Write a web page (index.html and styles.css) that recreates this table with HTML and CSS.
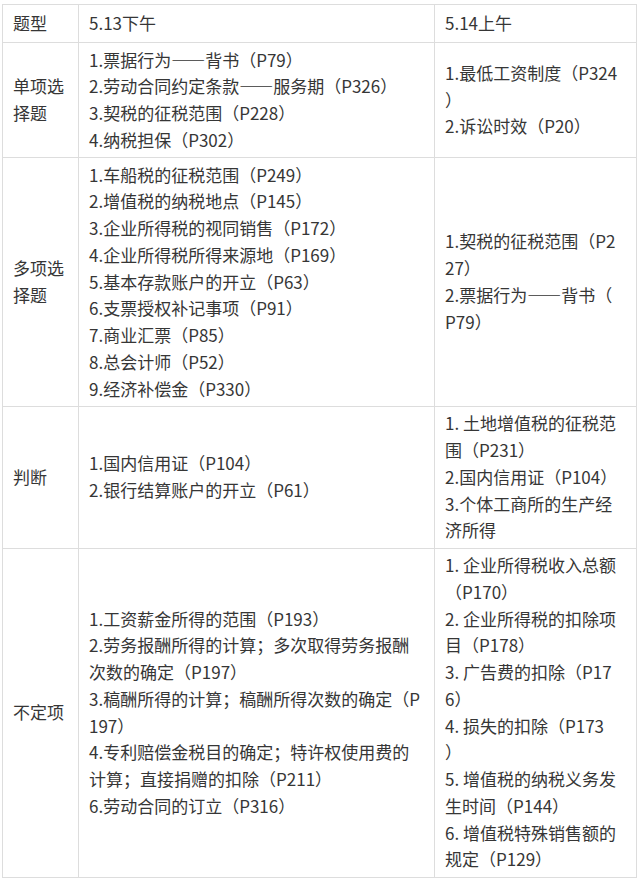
FILE: index.html
```html
<!DOCTYPE html>
<html lang="zh-CN">
<head>
<meta charset="utf-8">
<title>考点</title>
<link rel="stylesheet" href="styles.css">
</head>
<body>
<table class="grid">
  <colgroup>
    <col class="c1">
    <col class="c2">
    <col class="c3">
  </colgroup>
  <tr class="head">
    <td>题型</td>
    <td>5.13下午</td>
    <td>5.14上午</td>
  </tr>
  <tr>
    <td>单项选<br>择题</td>
    <td>1.票据行为——背书（P79）<br>2.劳动合同约定条款——服务期（P326）<br>3.契税的征税范围（P228）<br>4.纳税担保（P302）</td>
    <td>1.最低工资制度（P324<br>）<br>2.诉讼时效（P20）</td>
  </tr>
  <tr>
    <td>多项选<br>择题</td>
    <td>1.车船税的征税范围（P249）<br>2.增值税的纳税地点（P145）<br>3.企业所得税的视同销售（P172）<br>4.企业所得税所得来源地（P169）<br>5.基本存款账户的开立（P63）<br>6.支票授权补记事项（P91）<br>7.商业汇票（P85）<br>8.总会计师（P52）<br>9.经济补偿金（P330）</td>
    <td>1.契税的征税范围（P2<br>27）<br>2.票据行为——背书（<br>P79）</td>
  </tr>
  <tr>
    <td>判断</td>
    <td>1.国内信用证（P104）<br>2.银行结算账户的开立（P61）</td>
    <td>1. 土地增值税的征税范<br>围（P231）<br>2.国内信用证（P104）<br>3.个体工商所的生产经<br>济所得</td>
  </tr>
  <tr>
    <td>不定项</td>
    <td>1.工资薪金所得的范围（P193）<br>2.劳务报酬所得的计算；多次取得劳务报酬<br>次数的确定（P197）<br>3.稿酬所得的计算；稿酬所得次数的确定（P<br>197）<br>4.专利赔偿金税目的确定；特许权使用费的<br>计算；直接捐赠的扣除（P211）<br>6.劳动合同的订立（P316）</td>
    <td>1. 企业所得税收入总额<br>（P170）<br>2. 企业所得税的扣除项<br>目（P178）<br>3. 广告费的扣除（P17<br>6）<br>4. 损失的扣除（P173<br>）<br>5. 增值税的纳税义务发<br>生时间（P144）<br>6. 增值税特殊销售额的<br>规定（P129）</td>
  </tr>
</table>
</body>
</html>
```

FILE: styles.css
```css
html, body {
  margin: 0;
  padding: 0;
  background: #ffffff;
}

body {
  padding: 4px 0 0 2px;
  font-family: "Noto Sans CJK SC", "Noto Sans", sans-serif;
  font-size: 17px;
  line-height: 26.75px;
  color: #363636;
}

.grid {
  border-collapse: collapse;
  table-layout: fixed;
  width: 634px;
}

.c1 { width: 76px; }
.c2 { width: 356px; }
.c3 { width: 202px; }

.grid td {
  border: 1px solid #dddddd;
  padding: 3.5px 10px;
  vertical-align: middle;
  white-space: nowrap;
  overflow: hidden;
}

.grid .head td {
  height: 30px;
}
```
